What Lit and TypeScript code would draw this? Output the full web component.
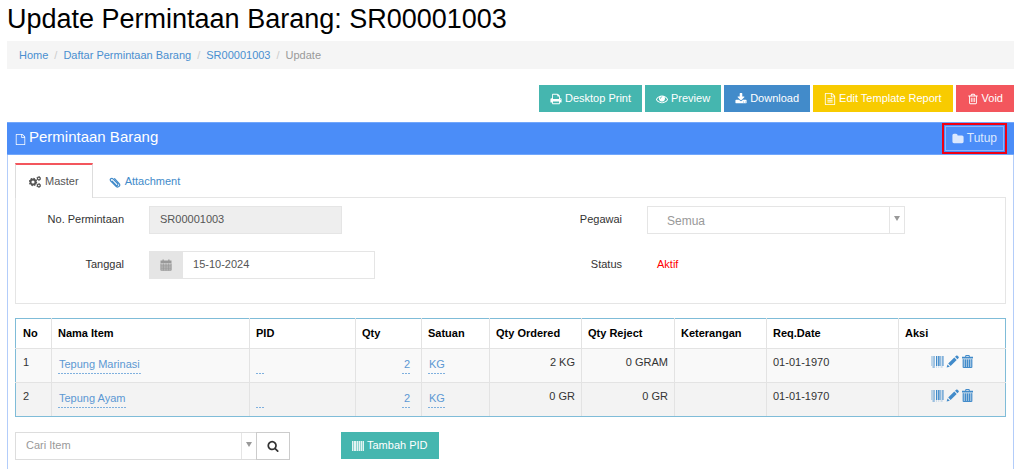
import { LitElement, html, css, svg } from "lit";
import { customElement, property } from "lit/decorators.js";

const FA: Record<string, string> = {
  print:
    "M448 1536h896v-256h-896v256zm0-640h896v-384h-160q-40 0-68-28t-28-68v-160h-640v640zm1152 64q0-26-19-45t-45-19-45 19-19 45 19 45 45 19 45-19 19-45zm128 0v416q0 13-9.5 22.5t-22.5 9.5h-224v160q0 40-28 68t-68 28h-960q-40 0-68-28t-28-68v-160h-224q-13 0-22.5-9.5t-9.5-22.5v-416q0-79 56.5-135.5t135.5-56.5h64v-544q0-40 28-68t68-28h672q40 0 88 20t76 48l152 152q28 28 48 76t20 88v256h64q79 0 135.5 56.5t56.5 135.5z",
  eye:
    "M1664 960q-152-236-381-353 61 104 61 225 0 185-131.5 316.5t-316.5 131.5-316.5-131.5-131.5-316.5q0-121 61-225-229 117-381 353 133 205 333.5 326.5t434.5 121.5 434.5-121.5 333.5-326.5zm-720-384q0-20-14-34t-34-14q-125 0-214.5 89.5t-89.5 214.5q0 20 14 34t34 14 34-14 14-34q0-86 61-147t147-61q20 0 34-14t14-34zm848 384q0 34-20 69-140 230-376.5 368.5t-499.5 138.5-499.5-139-376.5-368q-20-35-20-69t20-69q140-229 376.5-368t499.5-139 499.5 139 376.5 368q20 35 20 69z",
  download:
    "M1344 1344q0-26-19-45t-45-19-45 19-19 45 19 45 45 19 45-19 19-45zm256 0q0-26-19-45t-45-19-45 19-19 45 19 45 45 19 45-19 19-45zm128-224v320q0 40-28 68t-68 28h-1472q-40 0-68-28t-28-68v-320q0-40 28-68t68-28h465l135 136q58 56 136 56t136-56l136-136h464q40 0 68 28t28 68zm-325-569q17 41-14 70l-448 448q-18 19-45 19t-45-19l-448-448q-31-29-14-70 17-39 59-39h256v-448q0-26 19-45t45-19h256q26 0 45 19t19 45v448h256q42 0 59 39z",
  file:
    "M1596 380q28 28 48 76t20 88v1152q0 40-28 68t-68 28h-1344q-40 0-68-28t-28-68v-1600q0-40 28-68t68-28h896q40 0 88 20t76 48zm-444-244v376h376q-10-29-22-41l-313-313q-12-12-41-22zm384 1528v-1024h-416q-40 0-68-28t-28-68v-416h-768v1536h1280z",
  fileText:
    "M1596 380q28 28 48 76t20 88v1152q0 40-28 68t-68 28h-1344q-40 0-68-28t-28-68v-1600q0-40 28-68t68-28h896q40 0 88 20t76 48zm-444-244v376h376q-10-29-22-41l-313-313q-12-12-41-22zm384 1528v-1024h-416q-40 0-68-28t-28-68v-416h-768v1536h1280zM512 768h768v128h-768zM512 1024h768v128h-768zM512 1280h768v128h-768z",
  trashO:
    "M704 736v576q0 14-9 23t-23 9h-64q-14 0-23-9t-9-23v-576q0-14 9-23t23-9h64q14 0 23 9t9 23zm256 0v576q0 14-9 23t-23 9h-64q-14 0-23-9t-9-23v-576q0-14 9-23t23-9h64q14 0 23 9t9 23zm256 0v576q0 14-9 23t-23 9h-64q-14 0-23-9t-9-23v-576q0-14 9-23t23-9h64q14 0 23 9t9 23zm128 724v-948h-896v948q0 22 7 40.5t14.5 27 10.5 8.5h832q3 0 10.5-8.5t14.5-27 7-40.5zm-672-1076h448l-48-117q-7-9-17-11h-317q-10 2-17 11zm928 32v64q0 14-9 23t-23 9h-96v948q0 83-47 143.5t-113 60.5h-832q-66 0-113-58.5t-47-141.5v-952h-96q-14 0-23-9t-9-23v-64q0-14 9-23t23-9h309l70-167q15-37 54-63t79-26h320q40 0 79 26t54 63l70 167h309q14 0 23 9t9 23z",
  folder:
    "M1728 608v704q0 92-66 158t-158 66h-1216q-92 0-158-66t-66-158v-960q0-92 66-158t158-66h320q92 0 158 66t66 158v32h672q92 0 158 66t66 158z",
  search:
    "M1216 832q0-185-131.5-316.5t-316.5-131.5-316.5 131.5-131.5 316.5 131.5 316.5 316.5 131.5 316.5-131.5 131.5-316.5zm512 832q0 52-38 90t-90 38q-54 0-90-38l-343-342q-179 124-399 124-143 0-273.5-55.5t-225-150-150-225-55.5-273.5 55.5-273.5 150-225 225-150 273.5-55.5 273.5 55.5 225 150 150 225 55.5 273.5q0 220-124 399l343 343q37 37 37 90z",
};

const SHAPES: Record<string, { box: string; body: unknown }> = {
  cogs: {
    box: "0 0 12 12",
    body: svg`
      <circle cx="4" cy="6" r="2.500" fill="none" stroke="currentColor" stroke-width="1.900"/>
      <circle cx="4" cy="6" r="3.600" fill="none" stroke="currentColor" stroke-width="1.200" stroke-dasharray="1.500 1.327"/>
      <circle cx="9.800" cy="2.500" r="1.400" fill="none" stroke="currentColor" stroke-width="1.200"/>
      <circle cx="9.800" cy="2.500" r="2.100" fill="none" stroke="currentColor" stroke-width=".7" stroke-dasharray="1.100 1.100"/>
      <circle cx="9.800" cy="9.500" r="1.400" fill="none" stroke="currentColor" stroke-width="1.200"/>
      <circle cx="9.800" cy="9.500" r="2.100" fill="none" stroke="currentColor" stroke-width=".7" stroke-dasharray="1.100 1.100"/>`,
  },
  clip: {
    box: "0 0 12 12",
    body: svg`<g fill="none" stroke="currentColor" stroke-width="1.200" stroke-linecap="round">
      <path d="M3.200 5.200 7 9.200c1 1 2.600-.4 1.600-1.500L4 2.900C2.500 1.400.3 3.300 1.800 5l5.200 5.200c2.200 2.100 5-.6 3-2.800L5.600 2.600"/></g>`,
  },
  calendar: {
    box: "0 0 12 12",
    body: svg`<path fill="currentColor" d="M.5 1.500h2V.4h1.300v1.100h4.400V.4h1.300v1.100h2v2.400H.5z"/>
      <path fill="currentColor" opacity=".55" d="M.5 4.300h11v7.300H.5z"/>
      <path fill="none" stroke="currentColor" stroke-width=".8" d="M.9 4.500v6.700h10.200V4.500M3.400 4.500v7M6 4.500v7M8.600 4.500v7M.9 6.900h10.200M.9 9.200h10.200"/>`,
  },
  barcode: {
    box: "0 0 13 13",
    body: svg`<g fill="currentColor">
      <path opacity=".65" d="M.5 1h1v10h-1zM2.300 1h1.500v10H2.300z"/>
      <path d="M5 1h1.300v10H5zM7.100 1h1.500v10H7.100z"/>
      <path opacity=".8" d="M9.300 1h1v10h-1zM11.200 1h1.400v10h-1.400z"/>
      <path d="M1.500 11.500h2.300v1H1.500z"/>
      <path opacity=".45" d="M5 11.600h1v.9H5zM7.200 11.600h1v.9h-1zM9.600 11.600h2v.9h-2z"/></g>`,
  },
  barcodeLight: {
    box: "0 0 12 12",
    body: svg`<path fill="currentColor" opacity=".4" d="M0 1h12v10H0z"/>
      <path fill="currentColor" opacity=".75" d="M0 1h1v10H0zM2 1h2v10H2zM5 1h1v10H5zM7 1h1v10H7zM9 1h1v10H9zM11 1h1v10h-1z"/>`,
  },
  pencil: {
    box: "0 0 13 13",
    body: svg`<path fill="currentColor" d="M.6 12.600 1.500 9.400 3.800 11.700zM2.200 8.600 8.300 2.500 10.700 4.900 4.600 11zM9 1.800 10.200.7c.4-.4.9-.4 1.300 0l1.100 1.100c.4.400.4.900 0 1.300L11.400 4.200z"/>`,
  },
  trash: {
    box: "0 0 12 13",
    body: svg`<path fill="currentColor" d="M.5 1.700h3.200V1q0-1 1-1h2.600q1 0 1 1v.7h3.200v1.700H.5zM4.700.9v.8h2.600V.9z" fill-rule="evenodd"/>
      <path fill="currentColor" opacity=".5" d="M1.300 4.200h9.400v8.300H1.300z"/>
      <path fill="none" stroke="currentColor" d="M1.700 4.200v8.300h8.600V4.200M4 4.500v7.500M6 4.500v7.500M8 4.500v7.500"/>`,
  },
};

@customElement("ui-icon")
class UiIcon extends LitElement {
  @property() name = "";
  static styles = css`
    :host {
      display: inline-flex;
      flex: none;
      width: 12px;
      height: 12px;
    }
    svg {
      width: 100%;
      height: 100%;
      display: block;
    }
  `;
  render() {
    const shape = SHAPES[this.name];
    if (shape) {
      return html`<svg viewBox=${shape.box} aria-hidden="true">${shape.body}</svg>`;
    }
    return html`<svg viewBox="0 0 1792 1792" aria-hidden="true">
      <path fill="currentColor" d=${FA[this.name] ?? ""} />
    </svg>`;
  }
}

interface Item {
  name: string;
  qty: number;
  unit: string;
  ordered: string;
  reject: string;
  date: string;
}

const ITEMS: Item[] = [
  { name: "Tepung Marinasi", qty: 2, unit: "KG", ordered: "2 KG", reject: "0 GRAM", date: "01-01-1970" },
  { name: "Tepung Ayam", qty: 2, unit: "KG", ordered: "0 GR", reject: "0 GR", date: "01-01-1970" },
];

@customElement("app-root")
class AppRoot extends LitElement {
  static styles = css`
    :host {
      display: flex;
      flex-direction: column;
      box-sizing: border-box;
      min-height: 100vh;
      padding: 0 10px 0 7px;
      background: #fff;
      color: #333;
      font: 11px/15px "Liberation Sans", Arial, sans-serif;
    }
    * {
      box-sizing: border-box;
    }
    a {
      color: #4a8fd0;
      text-decoration: none;
    }
    button,
    input,
    select {
      font: inherit;
      border-radius: 0;
      margin: 0;
    }
    h1 {
      margin: 0;
      padding: 3px 0 6px;
      font-size: 27px;
      line-height: 32px;
      font-weight: 400;
      color: #000;
    }
    .crumbs {
      display: flex;
      align-items: center;
      height: 28px;
      margin: 0;
      padding: 0 12px;
      list-style: none;
      background: #f5f5f5;
      color: #999;
    }
    .crumbs li + li::before {
      content: "/";
      padding: 0 6px;
      color: #ccc;
    }
    .actions {
      display: flex;
      justify-content: flex-end;
      gap: 3px;
      padding: 16px 0 10px;
    }
    .btn {
      display: inline-flex;
      align-items: center;
      justify-content: center;
      gap: 3px;
      height: 27px;
      padding: 0 11px;
      border: 0;
      color: #fff;
      white-space: nowrap;
    }
    .teal {
      background: #45b6af;
    }
    .blue {
      background: #428bca;
    }
    .yellow {
      background: #f8cb00;
    }
    .red {
      background: #f3565d;
    }
    .panel {
      flex: 1;
      border: solid #b3cdfa;
      border-width: 0 1px;
    }
    .head {
      display: flex;
      align-items: center;
      justify-content: space-between;
      height: 33px;
      margin: 0 -1px;
      padding: 0 10px 0 8px;
      background: #4b8df8;
      border: solid #72a7fb;
      border-width: 1px 0;
      color: #fff;
    }
    .head h2 {
      display: flex;
      align-items: center;
      gap: 3px;
      margin: 0;
      font-size: 15px;
      line-height: 20px;
      font-weight: 400;
      padding-bottom: 4px;
    }
    .head h2 ui-icon {
      width: 11px;
      height: 11px;
      margin-top: 5px;
    }
    .close {
      height: 25px;
      padding: 0 6px;
      font-size: 12px;
      background: transparent;
      border: 1px solid #8db6fb;
      outline: 2px solid #f00014;
      outline-offset: 1px;
      color: #dbe8fe;
    }
    .body {
      padding: 8px 7px 0;
    }
    .tabs {
      display: flex;
    }
    .tab {
      display: inline-flex;
      align-items: center;
      gap: 4px;
      height: 35px;
      padding: 2px 16px 0;
      margin-bottom: -1px;
      border: 0;
      background: transparent;
      color: #428bca;
    }
    .tab.on {
      position: relative;
      padding: 0 13px;
      border: 1px solid #ddd;
      border-top: 2px solid #f3565d;
      border-bottom: 0;
      background: #fff;
      color: #555;
    }
    .pane {
      display: grid;
      grid-template-columns: 1fr 1fr;
      gap: 17px 7px;
      padding: 8px 0 24px;
      border: 1px solid #e5e5e5;
    }
    .field {
      display: grid;
      grid-template-columns: 22% 1fr;
      column-gap: 25px;
      align-items: center;
      height: 28px;
    }
    .field label,
    .field .name {
      text-align: right;
      padding-bottom: 2px;
    }
    .control {
      height: 28px;
      width: 100%;
      padding: 0 10px 2px;
      border: 1px solid #e5e5e5;
      background: #fff;
      color: #555;
      outline: 0;
    }
    .control[readonly] {
      background: #eee;
      width: 54%;
    }
    .group {
      display: flex;
      width: 63%;
    }
    .addon {
      display: flex;
      flex: none;
      align-items: center;
      justify-content: center;
      width: 33px;
      background: #e5e5e5;
      color: #999;
    }
    .status {
      padding: 0 10px 2px;
      color: #f00;
    }
    .pick {
      display: grid;
      grid-template-columns: 1fr 15px;
      height: 28px;
      flex: 1;
      border: 1px solid #ddd;
    }
    .pick select {
      grid-area: 1 / 1 / 2 / 3;
      appearance: none;
      border: 0;
      background: transparent;
      padding: 0 20px 2px 10px;
      color: #999;
      outline: 0;
    }
    .pick .arrow {
      grid-area: 1 / 2;
      display: flex;
      justify-content: center;
      padding-top: 9px;
      border-left: 1px solid #e5e5e5;
      pointer-events: none;
    }
    .arrow::before {
      content: "";
      height: 0;
      border: solid transparent;
      border-width: 5px 3px 0;
      border-top-color: #999;
    }
    .field .pick {
      width: 72%;
      border-color: #e5e5e5;
    }
    .field .pick select {
      padding: 3px 20px 0 19px;
      font-size: 12px;
    }
    table {
      width: 100%;
      margin-top: 14px;
      table-layout: fixed;
      border-collapse: collapse;
      border: 1px solid #7fbcd8;
    }
    th,
    td {
      padding: 6px 6px 8px 6px;
      border: 1px solid #e3e3e3;
      border-top-color: #ddd;
      text-align: left;
      vertical-align: top;
      white-space: nowrap;
    }
    thead th {
      padding: 7px 6px;
      color: #000;
      border-top-color: #7fbcd8;
    }
    tr > :first-child {
      padding-left: 7px;
      border-left-color: #7fbcd8;
    }
    tr > :last-child {
      border-right-color: #7fbcd8;
    }
    tbody tr:last-child td {
      border-bottom-color: #7fbcd8;
    }
    tbody tr {
      background: #f9f9f9;
    }
    tbody tr:nth-child(even) {
      background: #f3f3f3;
    }
    td a.edit {
      display: inline-block;
      min-width: 9px;
      height: 19px;
      line-height: 18px;
      padding: 0 1px;
      color: #5c98d3;
      background: repeating-linear-gradient(90deg, #7fb0de 0 2px, transparent 2px 3px) bottom / 100% 1px no-repeat;
      vertical-align: top;
    }
    td.num {
      text-align: right;
    }
    td.qty {
      padding-right: 10px;
    }
    .tools {
      display: flex;
      justify-content: center;
      gap: 2px;
    }
    .tools button {
      display: flex;
      padding: 0;
      border: 0;
      background: transparent;
      color: #428bca;
    }
    .tools ui-icon {
      width: 13px;
      height: 13px;
    }
    .foot {
      display: flex;
      gap: 51px;
      padding-top: 15px;
    }
    .find {
      display: flex;
      width: 275px;
    }
    .find button {
      display: flex;
      align-items: center;
      justify-content: center;
      width: 34px;
      height: 28px;
      margin-left: -1px;
      padding: 0;
      border: 1px solid #ccc;
      background: #fff;
      color: #333;
    }
  `;

  render() {
    return html`
      <h1>Update Permintaan Barang: SR00001003</h1>
      <ul class="crumbs">
        <li><a href="#">Home</a></li>
        <li><a href="#">Daftar Permintaan Barang</a></li>
        <li><a href="#">SR00001003</a></li>
        <li>Update</li>
      </ul>
      <div class="actions">
        <button class="btn teal"><ui-icon name="print"></ui-icon>Desktop Print</button>
        <button class="btn teal"><ui-icon name="eye"></ui-icon>Preview</button>
        <button class="btn blue"><ui-icon name="download"></ui-icon>Download</button>
        <button class="btn yellow"><ui-icon name="fileText"></ui-icon>Edit Template Report</button>
        <button class="btn red"><ui-icon name="trashO"></ui-icon>Void</button>
      </div>
      <section class="panel">
        <header class="head">
          <h2><ui-icon name="file"></ui-icon>Permintaan Barang</h2>
          <button class="btn close"><ui-icon name="folder"></ui-icon>Tutup</button>
        </header>
        <div class="body">
          <div class="tabs" role="tablist">
            <button class="tab on" role="tab" aria-selected="true"><ui-icon name="cogs"></ui-icon>Master</button>
            <button class="tab" role="tab" aria-selected="false"><ui-icon name="clip"></ui-icon>Attachment</button>
          </div>
          <div class="pane">
            <div class="field">
              <label for="no">No. Permintaan</label>
              <input class="control" id="no" readonly .value=${"SR00001003"} />
            </div>
            <div class="field">
              <label for="emp">Pegawai</label>
              <div class="pick">
                <select id="emp"><option>Semua</option></select>
                <span class="arrow"></span>
              </div>
            </div>
            <div class="field">
              <label for="date">Tanggal</label>
              <div class="group">
                <span class="addon"><ui-icon name="calendar"></ui-icon></span>
                <input class="control" id="date" .value=${"15-10-2024"} />
              </div>
            </div>
            <div class="field">
              <span class="name">Status</span>
              <span class="status">Aktif</span>
            </div>
          </div>
          <table>
            <colgroup>
              ${[36, 198, 106, 66, 68, 92, 93, 92, 132, 107].map((w) => html`<col width=${w} />`)}
            </colgroup>
            <thead>
              <tr>
                <th>No</th>
                <th>Nama Item</th>
                <th>PID</th>
                <th>Qty</th>
                <th>Satuan</th>
                <th>Qty Ordered</th>
                <th>Qty Reject</th>
                <th>Keterangan</th>
                <th>Req.Date</th>
                <th>Aksi</th>
              </tr>
            </thead>
            <tbody>
              ${ITEMS.map(
                (it, i) => html`<tr>
                  <td>${i + 1}</td>
                  <td><a class="edit" href="#">${it.name}</a></td>
                  <td><a class="edit" href="#" aria-label="PID"></a></td>
                  <td class="num qty"><a class="edit" href="#">${it.qty}</a></td>
                  <td><a class="edit" href="#">${it.unit}</a></td>
                  <td class="num">${it.ordered}</td>
                  <td class="num">${it.reject}</td>
                  <td></td>
                  <td>${it.date}</td>
                  <td>
                    <div class="tools">
                      <button aria-label="Barcode"><ui-icon name="barcode"></ui-icon></button>
                      <button aria-label="Edit"><ui-icon name="pencil"></ui-icon></button>
                      <button aria-label="Hapus"><ui-icon name="trash"></ui-icon></button>
                    </div>
                  </td>
                </tr>`
              )}
            </tbody>
          </table>
          <div class="foot">
            <div class="find">
              <div class="pick">
                <select aria-label="Cari Item"><option>Cari Item</option></select>
                <span class="arrow"></span>
              </div>
              <button aria-label="Cari"><ui-icon name="search"></ui-icon></button>
            </div>
            <button class="btn teal"><ui-icon name="barcodeLight"></ui-icon>Tambah PID</button>
          </div>
        </div>
      </section>
    `;
  }
}
